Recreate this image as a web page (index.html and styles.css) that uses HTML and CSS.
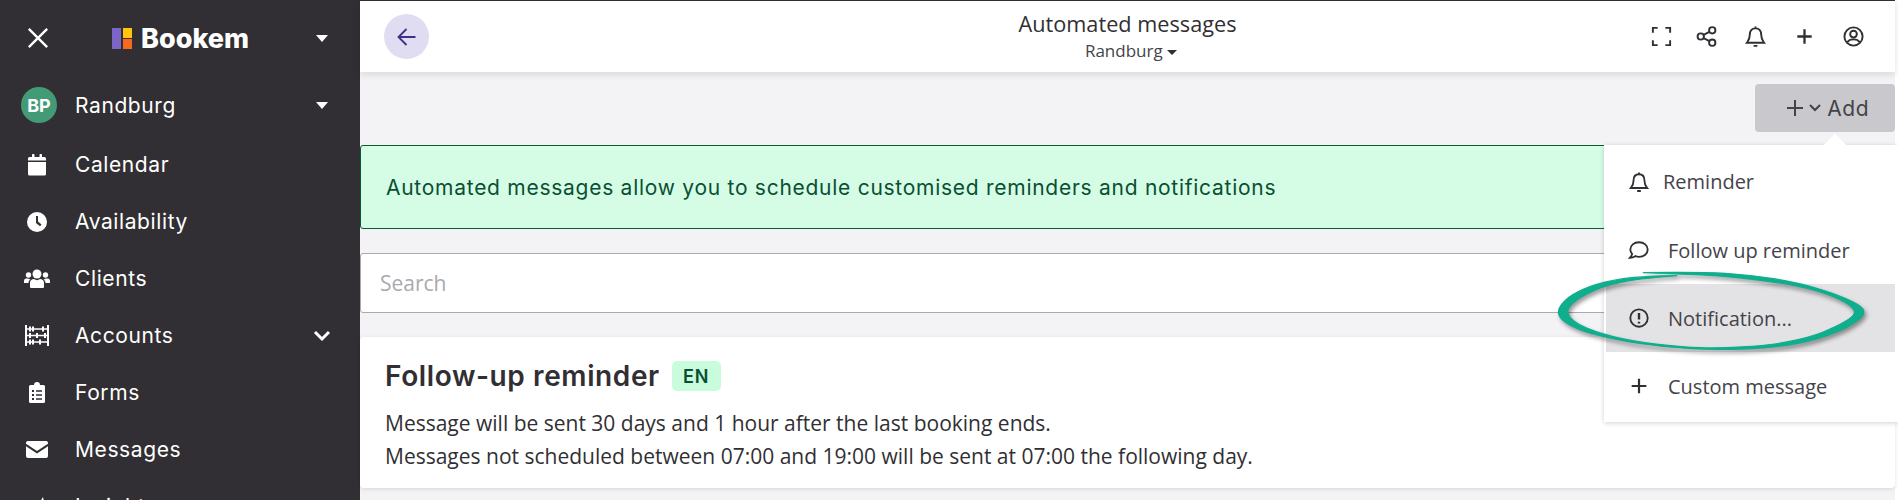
FILE: index.html
```html
<!DOCTYPE html>
<html>

<head>
    <title>Automated messages</title>
    <meta charset="utf-8" />
    <link rel="stylesheet" href="styles.css">
</head>

<body>
    <div class="sidebar">
        <div class="side-top">
            <svg class="icon-close" viewBox="0 0 24 24"><path d="M2 2 L22 22 M22 2 L2 22" /></svg>
            <div class="logo">
                <svg class="logo-mark" viewBox="0 0 21 21">
                    <rect x="0" y="0" width="9" height="21" fill="#7b66c6" />
                    <rect x="11" y="0" width="9" height="10" fill="#ffc60b" />
                    <rect x="11" y="11" width="9" height="10" fill="#f76a1c" />
                </svg>
                <span class="logo-text">Bookem</span>
            </div>
            <span class="caret-white"></span>
        </div>
        <div class="side-row side-user">
            <span class="avatar">BP</span>
            <span class="side-label">Randburg</span>
            <span class="caret-white"></span>
        </div>
        <div class="side-row">
            <span class="side-icon">
                <svg width="20" height="22" viewBox="0 0 20 22"><path d="M1 8 H19 V20 a1.5 1.5 0 0 1 -1.5 1.5 H2.5 A1.500 1.500 0 0 1 1 20 Z M2.500 3 H5 V1 a1 1 0 0 1 2.500 0 V3 H12.500 V1 a1 1 0 0 1 2.500 0 V3 H17.500 A1.500 1.500 0 0 1 19 4.500 V6.500 H1 V4.500 A1.500 1.500 0 0 1 2.500 3 Z" fill="#fff" /></svg>
            </span>
            <span class="side-label">Calendar</span>
        </div>
        <div class="side-row">
            <span class="side-icon">
                <svg width="20" height="20" viewBox="0 0 20 20"><circle cx="10" cy="10" r="10" fill="#fff" /><path d="M9 4 H11 V9.500 L14.500 12.500 L13 14.200 L9 11 Z" fill="#312f33" /></svg>
            </span>
            <span class="side-label">Availability</span>
        </div>
        <div class="side-row">
            <span class="side-icon">
                <svg width="26" height="19" viewBox="0 0 26 19" fill="#fff">
                    <circle cx="13" cy="5" r="4.500" />
                    <circle cx="4.500" cy="6" r="2.700" />
                    <circle cx="21.500" cy="6" r="2.700" />
                    <path d="M6 18 V14 C6 11 8 10 10 10 C12 11.500 14 11.500 16 10 C18 10 20 11 20 14 V18 a1 1 0 0 1 -1 1 H7 a1 1 0 0 1 -1 -1 Z" />
                    <path d="M0 14 V12 C0 10 1.500 9.500 3 9.500 C4 9.500 5.500 10 6.500 10.500 C5 11.500 4.500 12.500 4.500 14 Z" />
                    <path d="M26 14 V12 C26 10 24.500 9.500 23 9.500 C22 9.500 20.500 10 19.500 10.500 C21 11.500 21.500 12.500 21.500 14 Z" />
                </svg>
            </span>
            <span class="side-label">Clients</span>
        </div>
        <div class="side-row">
            <span class="side-icon">
                <svg width="24" height="21" viewBox="0 0 24 21" fill="#fff">
                    <path d="M0 0 H2 V21 H0 Z M22 0 H24 V21 H22 Z M2 3.300 H22 V4.700 H2 Z M2 9.800 H22 V11.200 H2 Z M2 16.300 H22 V17.700 H2 Z" />
                    <rect x="4" y="1.500" width="2" height="5" />
                    <rect x="7" y="1.500" width="2" height="5" />
                    <rect x="17" y="1.500" width="2" height="5" />
                    <rect x="4" y="8" width="2" height="5" />
                    <rect x="11" y="8" width="2" height="5" />
                    <rect x="19" y="8" width="2" height="5" />
                    <rect x="4" y="14.500" width="2" height="5" />
                    <rect x="7" y="14.500" width="2" height="5" />
                    <rect x="14" y="14.500" width="2" height="5" />
                </svg>
            </span>
            <span class="side-label">Accounts</span>
            <svg class="chevron-white" viewBox="0 0 18 12"><path d="M2 2 L9 9 L16 2" /></svg>
        </div>
        <div class="side-row">
            <span class="side-icon">
                <svg width="16" height="21" viewBox="0 0 16 21"><path fill="#fff" fill-rule="evenodd" d="M1.500 3 H5 a3 3 0 0 1 6 0 H14.500 A1.500 1.500 0 0 1 16 4.500 V19.500 A1.500 1.500 0 0 1 14.500 21 H1.500 A1.500 1.500 0 0 1 0 19.500 V4.500 A1.500 1.500 0 0 1 1.500 3 Z M3 8 V10 H5 V8 Z M3 12 V14 H5 V12 Z M3 16 V18 H5 V16 Z M7 8.300 V9.700 H13 V8.300 Z M7 12.300 V13.700 H13 V12.300 Z M7 16.300 V17.700 H13 V16.300 Z" /></svg>
            </span>
            <span class="side-label">Forms</span>
        </div>
        <div class="side-row">
            <span class="side-icon">
                <svg width="22" height="17" viewBox="0 0 22 17" fill="#fff"><path d="M2 0 H20 A2 2 0 0 1 22 2 V2.800 L11 10 L0 2.800 V2 A2 2 0 0 1 2 0 Z" /><path d="M0 5.200 L11 12.400 L22 5.200 V15 A2 2 0 0 1 20 17 H2 A2 2 0 0 1 0 15 Z" /></svg>
            </span>
            <span class="side-label">Messages</span>
        </div>
        <div class="side-row">
            <span class="side-icon">
                <svg width="24" height="20" viewBox="0 0 24 20" fill="#fff"><path d="M2 18 L8 3 L12 10 L18 0 L22 18 Z" /></svg>
            </span>
            <span class="side-label">Insights</span>
        </div>
    </div>

    <div class="main">
        <div class="topbar">
            <button class="btn-back">
                <svg width="20" height="20" viewBox="0 0 20 20"><path d="M18.500 10 H2 M9.500 2 L1.500 10 L9.500 18" /></svg>
            </button>
            <div class="top-title">
                <div class="txt-title">Automated messages</div>
                <div class="txt-sub">Randburg <span class="caret-dark"></span></div>
            </div>
            <div class="top-icons">
                <svg class="top-icon" viewBox="0 0 24 24"><path d="M8 3 H3 V8 M16 3 H21 V8 M3 16 V21 H8 M21 16 V21 H16" /></svg>
                <svg class="top-icon" viewBox="0 0 24 24"><circle cx="18" cy="5.500" r="3.300" /><circle cx="6" cy="12" r="3.300" /><circle cx="18" cy="18.500" r="3.300" /><path d="M9 10.400 L15 7.200 M9 13.600 L15 16.800" /></svg>
                <svg class="top-icon" viewBox="0 0 24 24"><path d="M12 1.500 V3.500 M12 3.500 C7.500 3.500 6 7 6 10.500 C6 15 4.500 16.500 3 18.500 H21 C19.500 16.500 18 15 18 10.500 C18 7 16.500 3.500 12 3.500 Z M10 21.800 H14" /></svg>
                <svg class="top-icon" viewBox="0 0 24 24"><path d="M12 4.500 V19.500 M4.500 12 H19.500" stroke-width="2.400" /></svg>
                <svg class="top-icon" viewBox="0 0 24 24"><circle cx="12" cy="12" r="9.500" /><circle cx="12" cy="9.500" r="3.500" /><path d="M5.500 18 C7 15.500 9 15 12 15 C15 15 17 15.500 18.500 18" /></svg>
            </div>
        </div>

        <div class="content">
            <div class="add-row">
                <button class="btn-add">
                    <svg width="16" height="16" viewBox="0 0 16 16"><path d="M8 0 V16 M0 8 H16" /></svg>
                    <svg width="12" height="8" viewBox="0 0 12 8"><path d="M1 1 L6 6 L11 1" /></svg>
                    <span>Add</span>
                </button>
            </div>
            <div class="banner">Automated messages allow you to schedule customised reminders and notifications</div>
            <div class="search">Search</div>
            <div class="card">
                <div class="card-head">
                    <h3>Follow-up reminder</h3>
                    <span class="badge">EN</span>
                </div>
                <p>Message will be sent 30 days and 1 hour after the last booking ends.</p>
                <p>Messages not scheduled between 07:00 and 19:00 will be sent at 07:00 the following day.</p>
            </div>
        </div>
    </div>

    <div class="menu">
        <span class="menu-arrow"></span>
        <div class="menu-item menu-first">
            <svg class="menu-icon" viewBox="0 0 24 24"><path d="M12 1.500 V3.500 M12 3.500 C7.500 3.500 6 7 6 10.500 C6 15 4.500 16.500 3 18.500 H21 C19.500 16.500 18 15 18 10.500 C18 7 16.500 3.500 12 3.500 Z M10 21.800 H14" /></svg>
            <span>Reminder</span>
        </div>
        <div class="menu-item">
            <svg class="menu-icon" viewBox="0 0 24 24"><path d="M12 3.500 C6.500 3.500 2.500 7 2.500 11.500 C2.500 13.500 3.300 15 4.500 16.300 C4.300 18 3.200 19.300 2 20.500 C4.500 20.500 6.500 19.700 8 18.700 C9.300 19.200 10.500 19.500 12 19.500 C17.500 19.500 21.500 16 21.500 11.500 C21.500 7 17.500 3.500 12 3.500 Z" /></svg>
            <span>Follow up reminder</span>
        </div>
        <div class="menu-item menu-active">
            <svg class="menu-icon" viewBox="0 0 24 24"><circle cx="12" cy="12" r="9.500" /><path d="M12 6.500 V13.500 M12 16 V18" stroke-width="2.600" /></svg>
            <span>Notification...</span>
        </div>
        <div class="menu-item">
            <svg class="menu-icon" viewBox="0 0 24 24"><path d="M12 4 V20 M4 12 H20" stroke-width="2.400" /></svg>
            <span>Custom message</span>
        </div>
    </div>

    <svg class="highlight" viewBox="0 0 1020 300">
        <path d="M280 38 Q450 36 525 40 Q600 45 675 57 Q750 70 800 85 Q850 100 885 115 Q920 130 932 140 Q945 150 940 162 Q935 175 907 192 Q880 210 830 227 Q780 245 715 255 Q650 265 575 267 Q500 270 425 266 Q350 262 275 251 Q200 240 150 227 Q100 215 70 200 Q40 185 31 172 Q22 160 28 145 Q35 130 57 112 Q80 95 120 80 Q160 65 220 56 Q280 48 380 47 Q280 55 230 63 Q180 72 140 88 Q100 105 80 120 Q60 135 55 147 Q50 160 60 172 Q70 185 100 200 Q130 215 190 230 Q250 245 325 253 Q400 262 450 263 Q500 265 575 261 Q650 258 715 245 Q780 232 820 216 Q860 200 885 185 Q910 170 913 160 Q917 150 898 135 Q880 120 830 102 Q780 85 715 73 Q650 62 575 54 Q500 47 440 44 Q380 42 280 38 Z" />
    </svg>
</body>

</html>
```
FILE: styles.css
```css
* {
    box-sizing: border-box;
}
html, body {
    height: 500px;
    overflow: hidden;
}
body {
    margin: 0;
    display: flex;
    background-color: #f3f3f6;
    font-family: 'Open Sans', sans-serif;
    color: #312f33;
}
svg {
    display: block;
    flex: none;
}
button {
    border: 0;
    padding: 0;
    font: inherit;
    color: inherit;
}

/* sidebar */
.sidebar {
    width: 360px;
    height: 500px;
    flex: none;
    overflow: hidden;
    background-color: #312f33;
    color: #fff;
    font-family: 'Inter', sans-serif;
}
.side-top {
    height: 76px;
    padding: 0 32px 0 27px;
    display: flex;
    align-items: center;
}
.icon-close {
    width: 22px;
    height: 22px;
    fill: none;
    stroke: #fff;
    stroke-width: 2.600;
}
.logo {
    margin-left: 63px;
    margin-right: auto;
    display: flex;
    align-items: center;
    gap: 8px;
}
.logo-mark {
    width: 21px;
    height: 21px;
}
.logo-text {
    font-size: 27px;
    font-weight: 800;
}
.caret-white {
    width: 0;
    height: 0;
    border-left: 6px solid transparent;
    border-right: 6px solid transparent;
    border-top: 7px solid #fff;
}
.side-row {
    height: 57px;
    padding: 0 29px 0 21px;
    display: flex;
    align-items: center;
}
.side-user {
    height: 58px;
    margin-bottom: 2px;
    padding-right: 32px;
}
.avatar {
    width: 36px;
    height: 36px;
    margin-right: 18px;
    border-radius: 50%;
    background-color: #439a77;
    font-size: 18px;
    font-weight: 700;
    display: flex;
    align-items: center;
    justify-content: center;
}
.side-icon {
    width: 32px;
    margin-right: 22px;
    display: flex;
    justify-content: center;
}
.side-label {
    flex: 1;
    font-size: 21px;
    letter-spacing: 0.6px;
}
.chevron-white {
    width: 18px;
    height: 12px;
    fill: none;
    stroke: #fff;
    stroke-width: 3;
}

/* main */
.main {
    flex: 1;
    min-width: 0;
    height: 500px;
    padding-right: 3px;
    background: linear-gradient(to left, #fff 3px, #f3f3f6 3px);
}
.topbar {
    height: 72px;
    border-top: 1px solid #312f33;
    background-color: #fff;
    box-shadow: 0 2px 8px rgba(0, 0, 0, .12);
    padding: 0 24px;
    display: grid;
    grid-template-columns: 1fr auto 1fr;
    align-items: center;
    position: relative;
}
.btn-back {
    width: 45px;
    height: 45px;
    border-radius: 50%;
    background-color: #e0dcf2;
    display: flex;
    align-items: center;
    justify-content: center;
}
.btn-back path {
    fill: none;
    stroke: #3f2f86;
    stroke-width: 1.800;
}
.top-title {
    text-align: center;
}
.txt-title {
    font-size: 21.700px;
    font-weight: 500;
    line-height: 28px;
}
.txt-sub {
    font-size: 17px;
    line-height: 25px;
    padding-left: 7px;
    color: #45434a;
}
.caret-dark {
    display: inline-block;
    vertical-align: middle;
    width: 0;
    height: 0;
    border-left: 5px solid transparent;
    border-right: 5px solid transparent;
    border-top: 5px solid #312f33;
}
.top-icons {
    display: flex;
    justify-content: flex-end;
    gap: 26px;
    margin-right: 6px;
}
.top-icon {
    width: 23px;
    height: 23px;
    fill: none;
    stroke: #312f33;
    stroke-width: 2;
}
.top-icon:first-child {
    margin-right: -4px;
}

/* content */
.content {
    display: flex;
    flex-direction: column;
}
.add-row {
    height: 73px;
    display: flex;
    justify-content: flex-end;
    align-items: flex-start;
    padding-top: 12px;
}
.btn-add {
    width: 140px;
    height: 48px;
    border-radius: 4px;
    background-color: #c9c8cc;
    color: #45434a;
    font-family: 'Inter', sans-serif;
    font-size: 21px;
    letter-spacing: 0.5px;
    padding-right: 26px;
    display: flex;
    align-items: center;
    justify-content: flex-end;
    gap: 6px;
}
.btn-add svg {
    fill: none;
    stroke: #45434a;
    stroke-width: 2;
}
.banner {
    height: 84px;
    border: 1px solid #0a5a35;
    border-radius: 3px;
    background-color: #d5fde6;
    color: #0a4f33;
    font-family: 'Inter', sans-serif;
    font-size: 21px;
    letter-spacing: 0.73px;
    padding-left: 25px;
    display: flex;
    align-items: center;
}
.search {
    height: 60px;
    margin-top: 24px;
    border: 1px solid #a9a9ae;
    border-radius: 3px;
    background-color: #fff;
    color: #a9a9ae;
    font-size: 21px;
    padding-left: 19px;
    display: flex;
    align-items: center;
}
.card {
    height: 151px;
    margin-top: 24px;
    border-radius: 4px;
    background-color: #fff;
    box-shadow: 0 1px 4px rgba(0, 0, 0, .12);
    padding: 24px 25px;
}
.card-head {
    display: flex;
    align-items: center;
    gap: 12px;
    margin-bottom: 16px;
}
.card h3 {
    margin: 0;
    font-family: 'Inter', sans-serif;
    font-size: 28px;
    font-weight: 600;
    letter-spacing: 0.6px;
    line-height: 30px;
}
.badge {
    width: 49px;
    height: 30px;
    border-radius: 5px;
    background-color: #c9fbdd;
    color: #0a4f33;
    font-family: 'Inter', sans-serif;
    font-size: 18px;
    font-weight: 600;
    letter-spacing: 1px;
    display: flex;
    align-items: center;
    justify-content: center;
}
.card p {
    margin: 0;
    font-size: 21px;
    line-height: 33px;
}

/* dropdown */
.menu {
    position: absolute;
    top: 145px;
    left: 1604px;
    width: 294px;
    height: 277px;
    padding-top: 2px;
    background-color: #fff;
    box-shadow: 0 1px 5px rgba(0, 0, 0, .18);
    color: #45434a;
    font-size: 20px;
}
.menu-arrow {
    position: absolute;
    top: -8px;
    left: 223px;
    width: 16px;
    height: 16px;
    background-color: #fff;
    transform: rotate(45deg);
}
.menu-item {
    height: 68px;
    padding: 0 0 0 24px;
    display: flex;
    align-items: center;
    gap: 18px;
    position: relative;
}
.menu-first {
    gap: 13px;
    height: 69px;
}
.menu-active {
    background-color: #e3e2e4;
    margin-left: 2px;
    margin-right: 3px;
    padding-left: 22px;
}
.menu-icon {
    width: 22px;
    height: 22px;
    fill: none;
    stroke: #312f33;
    stroke-width: 2;
}

/* hand drawn marker round the active item */
.highlight {
    position: absolute;
    top: 260px;
    left: 1550px;
    width: 340px;
    height: 100px;
    fill: #0fae8d;
    stroke: #0fae8d;
    stroke-width: 4;
    stroke-linejoin: round;
    filter: drop-shadow(2px 3px 2px rgba(0, 0, 0, .4));
}
```
